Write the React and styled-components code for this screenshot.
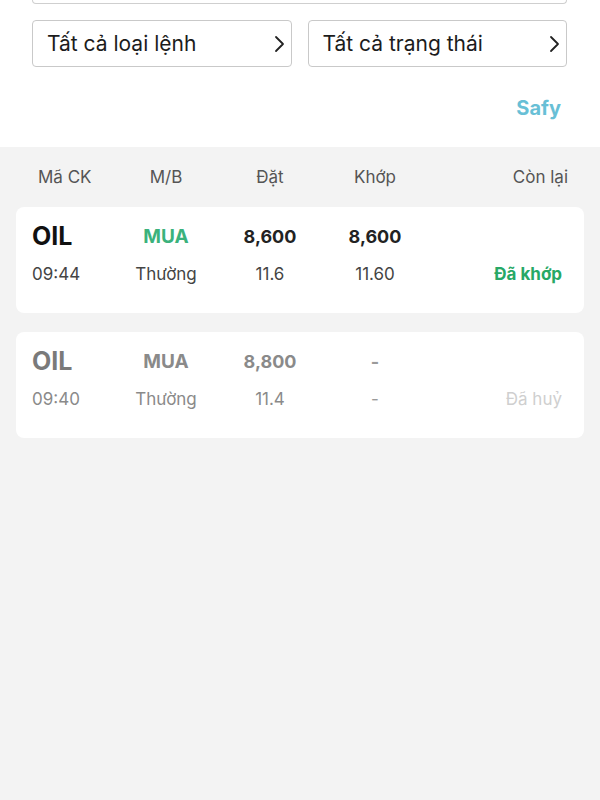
import React from "react";
import styled, { createGlobalStyle } from "styled-components";

const GlobalStyle = createGlobalStyle`
	html, body {
		margin: 0;
		padding: 0;
		background: #f3f3f3;
		font-family: Inter, "Noto Sans", sans-serif;
	}
`;

const Page = styled.div`
	width: 600px;
	min-height: 800px;
	background: #f3f3f3;
`;

const Top = styled.div`
	background: #fff;
	padding: 0 33px 18px 32px;
	display: flex;
	flex-direction: column;
`;

const SearchEdge = styled.div`
	height: 3px;
	border: 1px solid #cfcfcf;
	border-top: none;
	border-radius: 0 0 5px 5px;
`;

const Filters = styled.div`
	display: grid;
	grid-template-columns: 1fr 1fr;
	gap: 16px;
	margin-top: 16px;
`;

const FilterButton = styled.div`
	height: 45px;
	border: 1px solid #c9c9c9;
	border-radius: 4px;
	display: flex;
	align-items: center;
	justify-content: space-between;
	padding: 0 5px 0 14px;
	font-size: 21px;
	color: #1c1c1c;
`;

const Brand = styled.div`
	align-self: flex-end;
	margin-top: 20px;
	padding-right: 6px;
	font-size: 20px;
	font-weight: 700;
	color: #68bfd6;
	line-height: 42px;
`;

const Header = styled.div`
	display: grid;
	grid-template-columns: 74px 108px 100px 110px 1fr;
	padding: 9px 32px 0 38px;
	height: 42px;
	align-items: center;
	font-size: 17px;
	color: #555;
`;

const Cell = styled.div`
	text-align: ${(p) => p.$align || "center"};
	white-space: nowrap;
`;

const List = styled.div`
	display: flex;
	flex-direction: column;
	gap: 19px;
	padding: 0 16px;
	margin-top: 9px;
`;

const Card = styled.div`
	background: #fff;
	border-radius: 8px;
	height: 106px;
	padding: 11px 22px 0 16px;
	box-sizing: border-box;
`;

const Row = styled.div`
	display: grid;
	grid-template-columns: 80px 108px 100px 110px 1fr;
	align-items: center;
	height: ${(p) => p.$h}px;
`;

const Symbol = styled.div`
	font-size: 25px;
	font-weight: 700;
	color: ${(p) => (p.$dim ? "#7a7a7a" : "#111")};
`;

const Bold = styled(Cell)`
	font-size: ${(p) => p.$size || 18}px;
	font-weight: 700;
	color: ${(p) => p.$color};
`;

const Sub = styled(Cell)`
	font-size: 17px;
	color: ${(p) => p.$color};
	font-weight: ${(p) => (p.$strong ? 700 : 400)};
`;

const Chevron = () => (
	<svg width="14" height="20" viewBox="0 0 14 20">
		<path d="M4 3 L11 10 L4 17" fill="none" stroke="#222" strokeWidth="1.8" strokeLinecap="round" strokeLinejoin="round" />
	</svg>
);

const orders = [
	{ sym: "OIL", side: "MUA", price: "8,600", match: "8,600", time: "09:44", type: "Thường", p1: "11.6", p2: "11.60", status: "Đã khớp", dim: false },
	{ sym: "OIL", side: "MUA", price: "8,800", match: "-", time: "09:40", type: "Thường", p1: "11.4", p2: "-", status: "Đã huỷ", dim: true },
];

export default function App() {
	return (
		<Page>
			<GlobalStyle />
			<Top>
				<SearchEdge />
				<Filters>
					<FilterButton>
						Tất cả loại lệnh
						<Chevron />
					</FilterButton>
					<FilterButton>
						Tất cả trạng thái
						<Chevron />
					</FilterButton>
				</Filters>
				<Brand>Safy</Brand>
			</Top>
			<Header>
				<Cell $align="left">Mã CK</Cell>
				<Cell>M/B</Cell>
				<Cell>Đặt</Cell>
				<Cell>Khớp</Cell>
				<Cell $align="right">Còn lại</Cell>
			</Header>
			<List>
				{orders.map((o, i) => (
					<Card key={i}>
						<Row $h={36}>
							<Symbol $dim={o.dim}>{o.sym}</Symbol>
							<Bold $size={19} $color={o.dim ? "#8a8a8a" : "#3bb27c"}>{o.side}</Bold>
							<Bold $color={o.dim ? "#8a8a8a" : "#222"}>{o.price}</Bold>
							<Bold $color={o.dim ? "#9a9a9a" : "#222"}>{o.match}</Bold>
							<Cell />
						</Row>
						<Row $h={40}>
							<Sub $align="left" $color={o.dim ? "#8a8a8a" : "#444"}>{o.time}</Sub>
							<Sub $color={o.dim ? "#8a8a8a" : "#444"}>{o.type}</Sub>
							<Sub $color={o.dim ? "#8a8a8a" : "#444"}>{o.p1}</Sub>
							<Sub $color={o.dim ? "#9a9a9a" : "#444"}>{o.p2}</Sub>
							<Sub $align="right" $strong={!o.dim} $color={o.dim ? "#cfcfcf" : "#27a866"}>{o.status}</Sub>
						</Row>
					</Card>
				))}
			</List>
		</Page>
	);
}
